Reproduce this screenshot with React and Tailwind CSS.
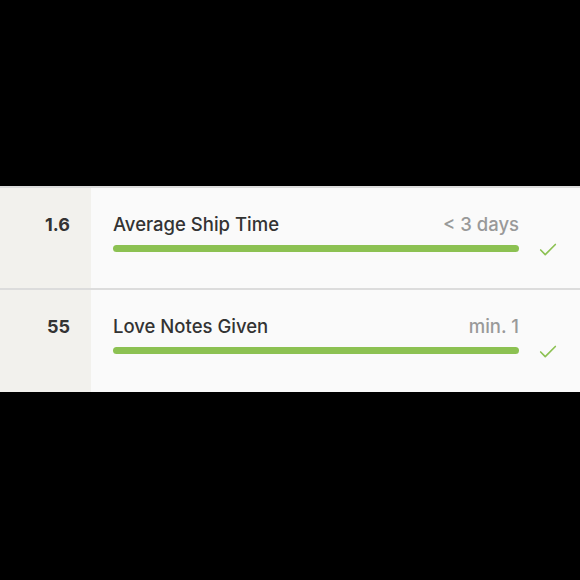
import { Check } from 'lucide-react';

const rows = [
  { value: '1.6', label: 'Average Ship Time', target: '< 3 days' },
  { value: '55', label: 'Love Notes Given', target: 'min. 1' },
];

function MetricRow({ value, label, target, last }) {
  return (
    <div className={`flex h-[102px] ${last ? '' : 'border-b-2 border-[#dcdcdc]'}`}>
      <div className="w-[91px] shrink-0 bg-[#f2f1ed] pr-[21px] pt-[23px] text-right text-[18px] font-bold text-[#333]">
        {value}
      </div>
      <div className="flex flex-1 bg-[#fafafa] pl-[22px] pt-[25px]">
        <div className="w-[406px]">
          <div className="flex items-baseline justify-between leading-[22px]">
            <span className="text-[18.5px] font-medium text-[#333]">{label}</span>
            <span className="text-[18.5px] font-medium text-[#999]">{target}</span>
          </div>
          <div className="mt-[10px] h-[7px] rounded-full bg-[#8cc152]" />
        </div>
        <Check className="ml-[18px] mt-[26px] h-[22px] w-[22px] text-[#8cc152]" strokeWidth={1.8} />
      </div>
    </div>
  );
}

export default function App() {
  return (
    <div className="flex h-[580px] w-[580px] flex-col bg-black pt-[186px] font-['Inter',sans-serif]">
      <div className="border-t-2 border-[#dcdcdc]">
        {rows.map((r, i) => (
          <MetricRow key={r.label} {...r} last={i === rows.length - 1} />
        ))}
      </div>
    </div>
  );
}
